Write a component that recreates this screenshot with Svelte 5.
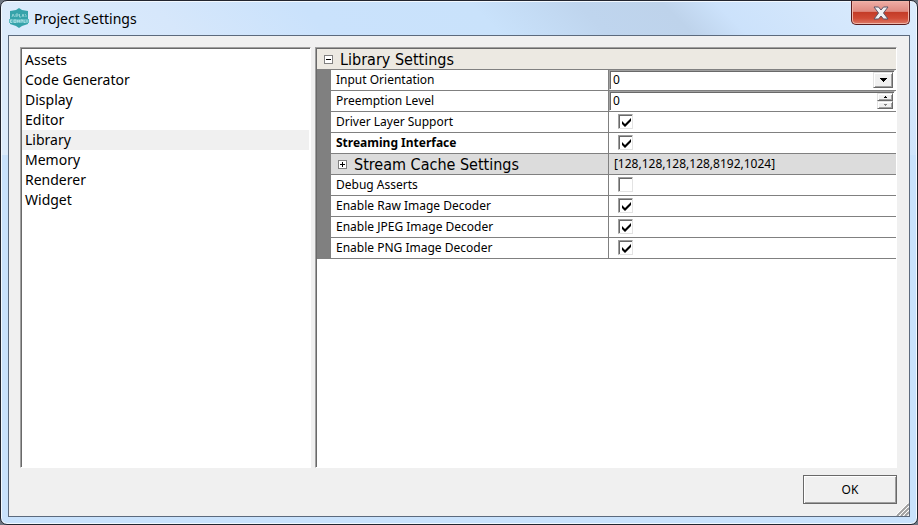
<script>
  const categories = ['Assets', 'Code Generator', 'Display', 'Editor', 'Library', 'Memory', 'Renderer', 'Widget'];
  let selected = $state('Library');

  const rows = [
    { id: 'orientation', label: 'Input Orientation', kind: 'select', value: '0' },
    { id: 'preemption', label: 'Preemption Level', kind: 'spin', value: '0' },
    { id: 'driver', label: 'Driver Layer Support', kind: 'check', value: true },
    { id: 'streaming', label: 'Streaming Interface', kind: 'check', value: true, bold: true },
    { id: 'cache', label: 'Stream Cache Settings', kind: 'group', value: '[128,128,128,128,8192,1024]' },
    { id: 'debug', label: 'Debug Asserts', kind: 'check', value: false },
    { id: 'raw', label: 'Enable Raw Image Decoder', kind: 'check', value: true },
    { id: 'jpeg', label: 'Enable JPEG Image Decoder', kind: 'check', value: true },
    { id: 'png', label: 'Enable PNG Image Decoder', kind: 'check', value: true }
  ];
</script>

{#snippet expander(open)}
  <svg width="9" height="9" viewBox="0 0 9 9" shape-rendering="crispEdges" aria-hidden="true">
    <rect x="0.5" y="0.5" width="8" height="8" fill="#fff" stroke="#808080" />
    <path d={open ? 'M2 4h5v1H2z' : 'M2 4h5v1H2zM4 2h1v5H4z'} fill="#000" />
  </svg>
{/snippet}

<div class="window">
  <header>
    <svg class="logo" width="20" height="20" viewBox="0 0 20 20" aria-hidden="true">
      <path d="M10 0l3 2 6 1v13l-6 2-3 2-3-2-6-2V3l6-1z" fill="#36a3aa" />
      <path d="M0 11h20v4H0z" fill="#5fbcc2" />
      <path d="M3 9l1-3 1.500 3M7 9V6h2v2H7M10.500 6v3H12M13 9l1-3 1 3M16 6l1 1.500V9" fill="none" stroke="#8fd0d4" />
      <path d="M3 12H1.500v2.500H3M5 12h2v2.500H5zM8.500 14.500V12l1 1.500 1-1.500v2.500M12 14.500V12h1.500v1.500M15 12v2.500h1.500M18 12v2.500" fill="none" stroke="#a5dbdf" />
    </svg>
    <h1>Project Settings</h1>
    <button class="close" type="button" aria-label="Close">
      <svg width="16" height="14" viewBox="0 0 16 14" aria-hidden="true">
        <path d="M1 1h4.500L8 4l2.500-3H15l-4.500 6 4.500 6h-4.500L8 10l-2.500 3H1l4.500-6z" fill="#f0f0f2" stroke="#5b5467" stroke-linejoin="round" />
      </svg>
    </button>
  </header>

  <main>
    <div class="panes">
      <ul class="sunken list">
        {#each categories as name}
          <li><button type="button" class:active={selected === name} onclick={() => (selected = name)}>{name}</button></li>
        {/each}
      </ul>

      <div class="sunken grid">
        <table>
          <colgroup><col class="gutter-col" /><col class="name-col" /><col /></colgroup>
          <thead>
            <tr><th colspan="3"><span class="section">{@render expander(true)}<span>Library Settings</span></span></th></tr>
          </thead>
          <tbody>
            {#each rows as row}
              <tr class={row.kind}>
                <td class="gutter"></td>
                <th scope="row" class:bold={row.bold}>
                  {#if row.kind === 'group'}
                    <span class="section">{@render expander(false)}<span>{row.label}</span></span>
                  {:else}
                    <label for={row.id}>{row.label}</label>
                  {/if}
                </th>
                <td class="value">
                  {#if row.kind === 'select'}
                    <div class="field">
                      <select id={row.id}><option>{row.value}</option></select>
                      <span class="drop"><svg width="7" height="4" viewBox="0 0 7 4" shape-rendering="crispEdges" aria-hidden="true"><path d="M0 0h7v1H6v1H5v1H4v1H3V3H2V2H1V1H0z" /></svg></span>
                    </div>
                  {:else if row.kind === 'spin'}
                    <div class="field">
                      <input id={row.id} type="text" inputmode="numeric" value={row.value} />
                      <span class="steps">
                        <button type="button" aria-label="Increase"><svg width="3" height="2" viewBox="0 0 3 2" shape-rendering="crispEdges"><path d="M1 0h1v1h1v1H0V1h1z" /></svg></button>
                        <button type="button" aria-label="Decrease"><svg width="3" height="2" viewBox="0 0 3 2" shape-rendering="crispEdges"><path d="M0 0h3v1H2v1H1V1H0z" fill="#808080" /></svg></button>
                      </span>
                    </div>
                  {:else if row.kind === 'check'}
                    <input id={row.id} type="checkbox" checked={row.value} />
                  {:else}
                    <span class="summary">{row.value}</span>
                  {/if}
                </td>
              </tr>
            {/each}
          </tbody>
        </table>
      </div>
    </div>

    <footer><button class="ok" type="button">OK</button></footer>
    <svg class="grip" width="13" height="13" viewBox="0 0 13 13" aria-hidden="true">
      <path d="M1 13L13 1M5 13l8-8M9 13l4-4" stroke="#a0a0a0" stroke-width="2" />
      <path d="M0 12L12 0M3 13L13 3M7 13l6-6" stroke="#fff" />
    </svg>
  </main>
</div>

<style>
  :global(body) { background: #6d7580; }
  .window {
    box-sizing: border-box;
    height: 100vh;
    display: flex;
    flex-direction: column;
    padding: 0 7px 7px;
    border: 1px solid #22252f;
    border-radius: 7px;
    box-shadow: inset 0 0 0 1px #f2f8fe;
    background:
      linear-gradient(45deg, #dcebfb 13%, #d6e7fb 28%, #cae2fc 42%, #c9e2fb 58%, #bfd5ee 68%, #bed3eb 76%, #cce2fb 81%, #dcecfd 100%) top / 100% 154px no-repeat,
      #c9e2fc;
    font: 12px/20px "Noto Sans", sans-serif;
    color: #000;
  }
  header {
    display: flex;
    align-items: center;
    gap: 5px;
    height: 34px;
    flex: none;
  }
  .logo { margin-left: 1px; }
  h1 {
    flex: 1;
    margin: 0;
    padding-top: 2px;
    font: 14px/20px "Noto Sans", sans-serif;
  }
  .close {
    align-self: flex-start;
    display: flex;
    align-items: center;
    justify-content: center;
    box-sizing: border-box;
    width: 59px;
    height: 24px;
    padding: 0;
    border: 1px solid #5a1c1e;
    border-top: 0;
    border-radius: 0 0 5px 5px;
    box-shadow: inset 0 0 0 1px #efb5a8;
    background: linear-gradient(#efaea6, #df8a80 45%, #c43c28 50%, #d04a35 75%, #dd7a68);
  }
  main {
    position: relative;
    flex: 1;
    min-height: 0;
    display: flex;
    flex-direction: column;
    border: 1px solid #5c6a7d;
    background: #f0f0f0;
    padding: 11px 12px 11px 11px;
  }
  .panes {
    flex: 1;
    min-height: 0;
    display: grid;
    grid-template-columns: 1fr 2fr;
    gap: 4px;
  }
  .sunken {
    border: 1px solid;
    border-color: #a0a0a0 #fff #fff #a0a0a0;
    box-shadow: inset 1px 1px #696969;
    background: #fff;
  }
  .list {
    margin: 0;
    padding: 2px 1px 0;
    list-style: none;
  }
  .list button {
    display: block;
    width: 100%;
    padding: 0 3px;
    border: 0;
    background: none;
    font: 14px/20px "Noto Sans", sans-serif;
    text-align: left;
    color: #000;
  }
  .list .active { background: #f0f0f0; }
  .grid { padding: 1px 0 0 1px; }
  table {
    width: 100%;
    table-layout: fixed;
    border-spacing: 0;
  }
  .gutter-col { width: 14px; }
  .name-col { width: 48%; }
  th, td {
    height: 20px;
    padding: 0;
    border-bottom: 1px solid #808080;
    font-weight: normal;
    text-align: left;
    vertical-align: middle;
    white-space: nowrap;
  }
  thead th { background: #ece9e2; }
  .gutter, .gutter + th { border-right: 1px solid #808080; }
  .gutter { background: #808080; border-right: 0; }
  label { display: block; padding-left: 5px; }
  .bold { font-weight: bold; }
  .section {
    display: flex;
    align-items: center;
    gap: 7px;
    height: 20px;
    padding-left: 7px;
    font: 16px/20px "DejaVu Sans Condensed", sans-serif;
  }
  .section span { padding-top: 2px; }
  .group th, .group .value { background: #dcdcdc; }
  .summary { padding-left: 5px; }
  input[type='checkbox'] {
    display: block;
    appearance: none;
    width: 15px;
    height: 15px;
    margin: 0 0 1px 9px;
    border: 1px solid;
    border-color: #a0a0a0 #e3e3e3 #e3e3e3 #a0a0a0;
    box-shadow: inset 1px 1px #696969;
    background: #fff;
  }
  input[type='checkbox']:checked {
    background: #fff url("data:image/svg+xml,%3Csvg xmlns='http://www.w3.org/2000/svg' viewBox='0 0 13 13'%3E%3Cpath d='M3 6v3l3 3 6-6V3L6 9z'/%3E%3C/svg%3E") no-repeat center / 13px 13px;
  }
  .field {
    box-sizing: border-box;
    display: flex;
    height: 20px;
    margin-right: 1px;
    border: 1px solid;
    border-color: #a0a0a0 #fff #fff #a0a0a0;
    box-shadow: inset 1px 1px #696969;
    padding: 1px;
  }
  select, input[type='text'] {
    appearance: none;
    flex: 1;
    min-width: 0;
    padding: 0 2px;
    border: 0;
    background: none;
    font: inherit;
    line-height: 16px;
    color: #000;
  }
  .drop, .steps button, .ok {
    display: flex;
    align-items: center;
    justify-content: center;
    box-sizing: border-box;
    border: 1px solid;
    border-color: #e3e3e3 #696969 #696969 #e3e3e3;
    box-shadow: inset 1px 1px #fff, inset -1px -1px #a0a0a0;
    background: #f0f0f0;
    padding: 0;
  }
  .drop {
    width: 20px;
    pointer-events: none;
  }
  .steps {
    display: flex;
    flex-direction: column;
    width: 16px;
  }
  .steps button { flex: 1; min-height: 0; }
  footer {
    display: flex;
    justify-content: flex-end;
    padding: 7px 0 1px;
  }
  .ok {
    width: 94px;
    height: 29px;
    border-color: #696969;
    font: inherit;
    color: #000;
  }
  .grip {
    position: absolute;
    right: 0;
    bottom: 0;
  }
</style>
